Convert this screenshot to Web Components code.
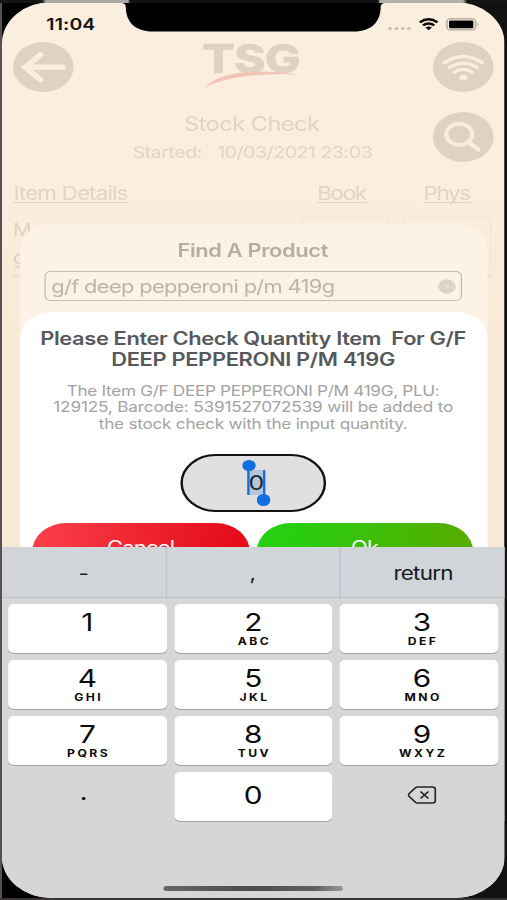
<!DOCTYPE html>
<html lang="en">
<head>
<meta charset="utf-8">
<title>Stock Check</title>
<style>
html,body{margin:0;width:507px;height:900px;overflow:hidden;background:#0b0b0c}
body{font-family:Inter,"Liberation Sans",sans-serif}
</style>
</head>
<body>
<phone-frame>
  <stock-page></stock-page>
  <find-panel></find-panel>
  <quantity-dialog></quantity-dialog>
  <number-keyboard></number-keyboard>
</phone-frame>
<script>
const SX = 1.2138; // horizontal stretch of the display

function define(name, html, setup) {
  customElements.define(name, class extends HTMLElement {
    constructor() {
      super();
      this.attachShadow({mode: 'open'}).innerHTML = html;
    }
    connectedCallback() { if (setup) setup(this, this.shadowRoot); }
  });
}

// One line of text, tracked so that it spans a given width
function fitText(el, root) {
  const s = root.querySelector('span');
  const w = parseFloat(el.getAttribute('w')) / SX;
  if (!w) return;
  const n = el.textContent.length;
  const natural = s.getBoundingClientRect().width / SX;
  const ls = n > 1 ? (w - natural) / (n - 1) : 0;
  s.style.letterSpacing = ls.toFixed(4) + 'px';
  s.style.marginRight = (-ls).toFixed(4) + 'px';
}

define('phone-frame', `
<style>
:host{display:block;position:relative;width:507px;height:900px;background:linear-gradient(90deg,#5a5054 0 2px,#000 2px 50%,#111 0)}
.rim{position:absolute;top:0;left:0;width:507px;height:3px;background:linear-gradient(90deg,#151515 0 42px,#aaa9a6 46px 128px,#111 130px 378px,#b3b0aa 380px 463px,#151515 467px)}
.foot{position:absolute;bottom:0;left:0;width:507px;height:2px;background:#383434}
.screen{position:absolute;left:2px;top:2px;width:414px;height:896px;border-radius:41px;overflow:hidden;background:#faeddd;transform-origin:0 0;transform:scaleX(${SX})}
.home{position:absolute;left:132.5px;top:884px;width:148.5px;height:5px;border-radius:3px;background:linear-gradient(90deg,#666 0,#4c4c4c 50%,#626262 85%,#999)}
.notch{position:absolute;left:98px;top:0;width:218px;height:31px}
</style>
<div class="foot"></div><div class="screen"><slot></slot>
<svg class="notch" viewBox="0 0 218 31"><path d="M0 0H218V1Q214 1 214 5C214 20 206 29.5 192 29.5H26C12 29.5 4 20 4 5Q4 1 0 1Z"/></svg>
<div class="home"></div></div><div class="rim"></div>`);

define('fit-text', `<style>:host{display:block;white-space:pre}span{display:inline-block}</style><span><slot></slot></span>`, fitText);

define('status-bar', `
<style>
:host{display:flex;height:40px;padding:9px 17px 0 36.5px;box-sizing:border-box;align-items:flex-start}
fit-text{font-size:16px;font-weight:600;line-height:27px;color:#14110e;flex:1}
svg{width:90px;height:27px;display:block}
</style>
<fit-text w="49">11:04</fit-text>
<svg viewBox="0 0 90 27">
<g fill="#c9beb1"><circle cx="12.7" cy="17.4" r="1.5"/><circle cx="17.9" cy="17.4" r="1.5"/><circle cx="23.1" cy="17.4" r="1.5"/><circle cx="28.3" cy="17.4" r="1.5"/></g>
<g fill="none" stroke="#0d0b09" stroke-width="2.3"><path d="M37.2 11.4Q44.5 5.1 51.8 11.4"/><path d="M39.8 14.4Q44.5 10.5 49.2 14.4"/></g>
<path d="M41.8 16.5Q44.5 14.3 47.2 16.5L44.5 19.2Z" fill="#0d0b09"/>
<rect x="59.5" y="7.8" width="23.6" height="11" rx="2.8" fill="none" stroke="#b9b0a3" stroke-width="1.4"/>
<rect x="61.3" y="9.4" width="20" height="7.9" rx="1.3"/><path d="M84.6 11.3q2 2 0 4z" fill="#b9b0a3"/>
</svg>`);

define('round-button', `
<style>:host{display:block;width:50px;height:50px;border-radius:50%;background:#ded2c2}svg{display:block;fill:none;stroke:#faeddd}</style>
<svg width="50" height="50" viewBox="0 0 50 50"></svg>`, (el, root) => {
  const icons = {
    back: '<path d="M40.8 25.2H12" stroke-width="5.2" stroke-linecap="round"/><path d="M22.6 12.8L10.2 25.2L22.6 37.6" stroke-width="5.2" stroke-linecap="round"/>',
    wifi: '<path d="M9.5 20.8Q25 8.2 40.5 20.8M13.6 25.8Q25 16.5 36.4 25.8M17.8 30.3Q25 24.5 32.2 30.3" stroke-width="3.3" stroke-linecap="round"/><ellipse cx="25" cy="35.6" rx="3.6" ry="2.6" fill="#faeddd" stroke="none"/>',
    search: '<circle cx="21.7" cy="22.3" r="10.6" stroke-width="3.4"/><path d="M29.5 30.2L37.4 37.6" stroke-width="4" stroke-linecap="round"/>'
  };
  root.querySelector('svg').innerHTML = icons[el.getAttribute('icon')];
});

define('brand-logo', `
<style>
:host{display:grid;justify-items:center;width:80px;height:50px;color:#ded2c2;margin-left:-4px}
fit-text,svg{grid-area:1/1}
fit-text{font-size:39.5px;font-weight:800;line-height:34px;height:32px;-webkit-text-stroke:.4px #ded2c2}
svg{width:80px;height:50px}
</style>
<fit-text w="98.5">TSG</fit-text>
<svg viewBox="0 0 80 50"><path d="M.5 46C12 31 38 25.5 78 32.6C46 30.8 18 34.5 .5 46Z" fill="#f4c3b8"/></svg>`);

define('stock-page', `
<style>
:host{display:block;height:896px;background:linear-gradient(#faeede 0,#faeede 190px,#f9e9d7 330px,#f9e8d6);color:#e0d4c5}
.bar{display:grid;grid-template-columns:50px 1fr 50px;padding:0 9.4px 0 9.4px;justify-items:center}
.bar.two{margin-top:20px}
.t{display:flex;flex-direction:column;align-items:center;margin-left:-2px}
.t1{font-size:19.5px;line-height:28px;margin-top:-2px}
.t2{font-size:16px;line-height:24px;margin-top:1.5px;margin-left:1px}
.cols{display:flex;padding:20px 29px 0 9.4px;font-size:18.5px;line-height:24px;margin-top:-2px}
.cols fit-text{border-bottom:1.5px solid #e0d4c5;height:20px;line-height:23px;margin-right:46.5px}
.cols fit-text:first-child{margin-right:155.5px}.cols fit-text:last-child{margin:0}
.row{display:grid;grid-template-columns:1fr 72px 72px;gap:12px;margin:14.5px 11px 0 9px;height:59px;border-bottom:1px solid #e4d6c5}
.row div{font-size:17px;line-height:28px;color:#ded1c1;margin-top:-1px}
.row i{border:1px solid #f2e4d3;border-radius:4px;height:52px}
</style>
<status-bar></status-bar>
<div class="bar"><round-button icon="back"></round-button><brand-logo></brand-logo><round-button icon="wifi"></round-button></div>
<div class="bar two"><span></span><div class="t"><fit-text class="t1" w="136">Stock Check</fit-text><fit-text class="t2" w="240">Started:   10/03/2021 23:03</fit-text></div><round-button icon="search"></round-button></div>
<div class="cols"><fit-text w="115">Item Details</fit-text><fit-text w="50">Book</fit-text><fit-text w="47.5">Phys</fit-text></div>
<div class="row"><div>M<br>g</div><i></i><i></i></div>`);

define('find-panel', `
<style>
:host{position:absolute;left:14.5px;top:222px;width:385px;height:400px;border-radius:26px;background:#fcf2e5;box-sizing:border-box;padding:14px 21px 0 20.5px;display:flex;flex-direction:column;align-items:center}
.h{font-size:18px;font-weight:600;line-height:26px;color:#b6ada1}
.field{align-self:stretch;display:flex;align-items:center;justify-content:space-between;height:29.5px;box-sizing:border-box;border:1.4px solid #c5bbae;border-radius:5px;margin-top:7.2px;padding:1px 3.5px 0 4.5px;font-size:18px;line-height:27px;color:#beb4a8}
</style>
<fit-text class="h" w="151">Find A Product</fit-text>
<div class="field"><fit-text w="284">g/f deep pepperoni p/m 419g</fit-text>
<svg width="15" height="15" viewBox="0 0 15 15"><circle cx="7.5" cy="7.5" r="7.2" fill="#ddd3c7"/><path d="M5.7 5.7l3.6 3.6M9.3 5.7L5.7 9.3" stroke="#ebe1d4" stroke-width="1.3"/></svg></div>`);

define('quantity-input', `
<style>
:host{display:flex;align-items:center;justify-content:center;width:120.5px;height:58px;box-sizing:border-box;border:2px solid #111;border-radius:29px;background:#e0e0e0}
.sel{position:relative;margin-left:5px;width:12.4px;height:25px;display:flex;justify-content:center;background:#b5c6d9;font-size:20.5px;line-height:25px;color:#1b2632}
.sel::before,.sel::after{content:"";position:absolute;top:0;width:1.8px;height:25px;background:#126fe0}
.sel::before{left:-1px}.sel::after{right:-1px}
i{position:absolute;width:11.4px;height:11.4px;border-radius:50%;background:#126fe0}
.a{left:-5.8px;top:-10.5px}.b{right:-5.8px;bottom:-10.5px}
</style>
<div class="sel">0<i class="a"></i><i class="b"></i></div>`);

define('pill-button', `
<style>
:host{display:flex;flex:1;height:56px;border-radius:28px;justify-content:center;color:#fff;font-size:18px;line-height:50px}
:host([kind=cancel]){background:linear-gradient(100deg,#fa3d49 5%,#e50d1a 88%)}
:host([kind=ok]){background:linear-gradient(100deg,#26cf10 15%,#55ad00 90%)}
</style><slot></slot>`);

define('quantity-dialog', `
<style>
:host{position:absolute;left:14.5px;top:310px;width:385px;height:320px;border-radius:26px;background:#fff;display:flex;flex-direction:column;align-items:center;box-sizing:border-box;padding-top:16px}
.h{font-size:18px;font-weight:600;line-height:21px;color:#56595b}
.p{font-size:14.2px;line-height:16.6px;color:#a3a3a3}
.p.first{margin-top:12.5px}
quantity-input{margin-top:21.5px}
.acts{display:flex;align-self:stretch;gap:6px;padding:0 11.3px 0 10.9px;margin-top:11px}
</style>
<fit-text class="h" w="426">Please Enter Check Quantity Item  For G/F</fit-text>
<fit-text class="h" w="284">DEEP PEPPERONI P/M 419G</fit-text>
<fit-text class="p first" w="373">The Item G/F DEEP PEPPERONI P/M 419G, PLU:</fit-text>
<fit-text class="p" w="400">129125, Barcode: 5391527072539 will be added to</fit-text>
<fit-text class="p" w="309">the stock check with the input quantity.</fit-text>
<quantity-input></quantity-input>
<div class="acts"><pill-button kind="cancel"><fit-text w="68">Cancel</fit-text></pill-button><pill-button kind="ok"><fit-text w="28">Ok</fit-text></pill-button></div>`);

define('key-cap', `
<style>
:host{display:flex;flex-direction:column;align-items:center;height:48.5px;border-radius:5px;background:#fff;box-shadow:0 1px 0 #a2a2a5;color:#0b0b0b}
:host([plain]){background:none;box-shadow:none}
:host([right]){padding-left:4.5px}
:host([left]){padding-right:6px}
b{font-weight:400;font-size:24.5px;line-height:26px;margin-top:4.5px}
small{font-weight:700;font-size:10px;line-height:12px;letter-spacing:2px;margin:.5px -2px 0 0}
:host([solo]) b{margin-top:10px}
:host([left]) b{margin-top:8px;font-size:21px;font-weight:500}
svg{display:none;margin-top:14px}
:host([erase]) svg{display:block}
:host([erase]) b,:host([erase]) small{display:none}
</style><b></b><small></small><svg width="24" height="18" viewBox="0 0 24 18" fill="none" stroke="#242424" stroke-width="1.4"><path d="M8.2 1H20.3Q23 1 23 3.6V14.4Q23 17 20.3 17H8.2Q7.3 17 6.6 16.3L1.3 10.2Q.4 9 1.3 7.8L6.6 1.7Q7.3 1 8.2 1Z"/><path d="M10.8 5.6L17.3 12.4M17.3 5.6L10.8 12.4"/></svg>`, (el, root) => {
  root.querySelector('b').textContent = el.getAttribute('n') || '';
  root.querySelector('small').textContent = el.getAttribute('l') || '';
});

define('number-keyboard', `
<style>
:host{position:absolute;left:0;top:545px;width:414px;height:351px;background:#d6d6d8}
.tools{display:grid;grid-template-columns:135.5px 143px 1fr;height:51px;box-sizing:border-box;background:#d1d4d9;border-bottom:1px solid #bfc1c5;font-size:18.5px;line-height:52px;color:#17191c}
.tools>*{display:flex;justify-content:center;border-right:1px solid #bec1c6}
.tools>:last-child{border:0;padding-left:2px}
.keys{display:grid;grid-template-columns:repeat(3,1fr);gap:7.6px 6px;padding:6px 5px 0}
</style>
<div class="tools"><div>-</div><div>,</div><div><fit-text w="60">return</fit-text></div></div>
<div class="keys">
<key-cap n="1"></key-cap><key-cap n="2" l="ABC"></key-cap><key-cap right n="3" l="DEF"></key-cap>
<key-cap n="4" l="GHI"></key-cap><key-cap n="5" l="JKL"></key-cap><key-cap right n="6" l="MNO"></key-cap>
<key-cap n="7" l="PQRS"></key-cap><key-cap n="8" l="TUV"></key-cap><key-cap right n="9" l="WXYZ"></key-cap>
<key-cap n="." plain solo left></key-cap><key-cap n="0" solo></key-cap><key-cap erase plain right></key-cap>
</div>`);
</script>
</body>
</html>
